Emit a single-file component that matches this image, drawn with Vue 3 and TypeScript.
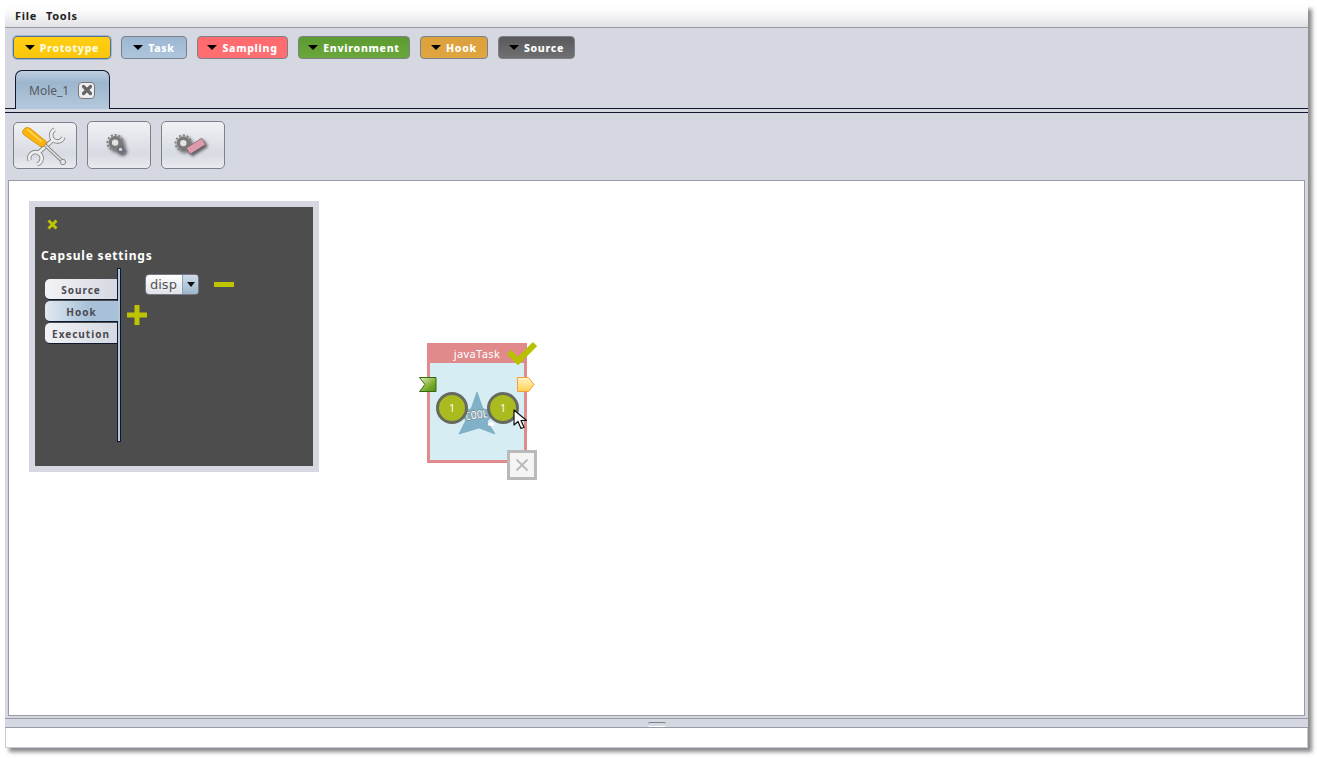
<script setup lang="ts">
const menus = ['File', 'Tools'];

const palette = [
  { name: 'Prototype', cls: 'proto' },
  { name: 'Task', cls: 'task' },
  { name: 'Sampling', cls: 'sampling' },
  { name: 'Environment', cls: 'env' },
  { name: 'Hook', cls: 'hook' },
  { name: 'Source', cls: 'source' },
];

const settingsTabs = [
  { name: 'Source', active: false },
  { name: 'Hook', active: true },
  { name: 'Execution', active: false },
];
</script>

<template>
  <div class="page">
    <div class="window">
      <div class="menubar">
        <span v-for="m in menus" :key="m">{{ m }}</span>
      </div>

      <div class="palette">
        <button v-for="p in palette" :key="p.name" class="pal-btn" :class="p.cls">
          <i class="arrow"></i>{{ p.name }}
        </button>
      </div>

      <div class="tabstrip">
        <div class="tab">
          <span>Mole_1</span>
          <span class="tab-close">
            <svg width="12" height="12" viewBox="0 0 12 12">
              <path d="M2.5 2.5l7 7M9.5 2.5l-7 7" stroke="#666" stroke-width="3.2" stroke-linecap="round" />
            </svg>
          </span>
        </div>
      </div>

      <div class="tools">
        <button class="tool first">
          <svg width="64" height="47" viewBox="0 0 64 47">
            <!-- wrench -->
            <g fill="none" stroke="#858585" stroke-width="4.6">
              <path d="M24 32 L40 18" />
              <path d="M42 7A6.5 6.5 0 1 0 51 15" />
              <path d="M24 43A6.5 6.5 0 1 0 16 39" />
            </g>
            <g fill="none" stroke="#eceded" stroke-width="2.8">
              <path d="M24 32 L40 18" />
              <path d="M42 7A6.5 6.5 0 1 0 51 15" />
              <path d="M24 43A6.5 6.5 0 1 0 16 39" />
            </g>
            <!-- screwdriver -->
            <path d="M31 22 L50 40" stroke="#777" stroke-width="3.4" />
            <path d="M31 22 L50 40" stroke="#e2e2e2" stroke-width="1.8" />
            <circle cx="50.5" cy="40.5" r="2.8" fill="#e4e4e4" stroke="#888" />
            <path d="M10 7c2-3 5-2 7-1l17 14-3 4-3 1-17-12c-2-1-3-4-1-6z" fill="#fbb40c" stroke="#cf8400" stroke-width="0.8" />
            <path d="M14 7l14 12" stroke="#ffd563" stroke-width="1.6" stroke-linecap="round" />
          </svg>
        </button>
        <button class="tool">
          <svg class="soft" width="64" height="47" viewBox="0 0 64 47">
            <circle cx="28" cy="20.5" r="5" fill="#e4e4e4" stroke="#7a7a7a" stroke-width="3.4" />
            <circle cx="28" cy="20.5" r="8" fill="none" stroke="#858585" stroke-width="2" stroke-dasharray="2.2 1.9" />
            <circle cx="33.6" cy="27.5" r="2.8" fill="#cfd3da" stroke="#6a6f7a" stroke-width="2" />
            <circle cx="33.6" cy="27.5" r="4.6" fill="none" stroke="#858585" stroke-width="1.3" stroke-dasharray="1.4 1.3" />
          </svg>
        </button>
        <button class="tool">
          <svg class="soft" width="64" height="47" viewBox="0 0 64 47">
            <circle cx="22" cy="21" r="5" fill="#e4e4e4" stroke="#7a7a7a" stroke-width="3.4" />
            <circle cx="22" cy="21" r="8" fill="none" stroke="#858585" stroke-width="2" stroke-dasharray="2.2 1.9" />
            <path d="M25 26 L41 16 L45 22.5 L29 32.5z" fill="#dd9aac" stroke="#7a5f6a" stroke-width="0.8" />
          </svg>
        </button>
      </div>

      <div class="canvas">
        <div class="panel">
          <svg class="panel-close" width="11" height="11" viewBox="0 0 11 11">
            <path d="M1.5 1.5l8 8M9.5 1.5l-8 8" stroke="#bec400" stroke-width="3" />
          </svg>
          <div class="panel-title">Capsule settings</div>
          <div class="panel-body">
            <div class="side-tabs">
              <div v-for="t in settingsTabs" :key="t.name" class="side-tab" :class="{ active: t.active }">{{ t.name }}</div>
            </div>
            <div class="side-bar"></div>
            <div class="panel-main">
              <div class="combo-row">
                <div class="combo">
                  <span class="combo-text">disp</span>
                  <span class="combo-btn"><i></i></span>
                </div>
                <svg class="minus" width="20" height="5"><rect width="20" height="5" fill="#bec400" /></svg>
              </div>
              <svg class="plus" width="20" height="20" viewBox="0 0 20 20">
                <path d="M7.5 0h5v7.5H20v5h-7.5V20h-5v-7.5H0v-5h7.5z" fill="#bec400" />
              </svg>
            </div>
          </div>
        </div>

        <div class="capsule">
          <div class="cap-title">javaTask</div>
          <div class="cap-body"></div>
          <svg class="cap-check" width="30" height="25" viewBox="0 0 30 25">
            <path d="M2 11l9 9L28 3" fill="none" stroke="#b8c000" stroke-width="6" />
          </svg>
          <svg class="slot-in" width="18" height="15" viewBox="0 0 18 15">
            <defs>
              <linearGradient id="gi" x1="0" y1="0" x2="1" y2="1">
                <stop offset="0" stop-color="#e8f2c8" />
                <stop offset="0.6" stop-color="#7fae2c" />
                <stop offset="1" stop-color="#4f8a1a" />
              </linearGradient>
            </defs>
            <path d="M.5.5h16.5v14H.5l5.5-7z" fill="url(#gi)" stroke="#2f6a10" />
          </svg>
          <svg class="slot-out" width="18" height="15" viewBox="0 0 18 15">
            <defs>
              <linearGradient id="go" x1="0" y1="0" x2="0" y2="1">
                <stop offset="0" stop-color="#fff3c4" />
                <stop offset="1" stop-color="#ffd050" />
              </linearGradient>
            </defs>
            <path d="M.5.5h11l5.5 7-5.5 7H.5z" fill="url(#go)" stroke="#f0a040" />
          </svg>
          <svg class="star" width="46" height="46" viewBox="0 0 46 46">
            <path d="M23 1L29 18L45 20L33 30L41 43L25 37L5 43L12 29L1 20L17 18z" fill="#7fb2c8" stroke="#6d9db3" stroke-width="0.6" />
            <text x="23" y="28" text-anchor="middle" class="cool" textLength="22" lengthAdjust="spacingAndGlyphs" transform="rotate(-8 23 28)">COOL</text>
            <ellipse cx="37" cy="33" rx="3" ry="2" fill="#fff" />
          </svg>
          <div class="badge b1">1</div>
          <div class="badge b2">1</div>
          <svg class="cursor" width="16" height="21" viewBox="0 0 16 21">
            <path d="M1 1v15l4-3.5 3 7 3-1.3-3-6.7h5.5z" fill="#fff" stroke="#111" stroke-width="1.2" stroke-linejoin="round" />
          </svg>
          <div class="cap-remove">
            <svg width="14" height="14" viewBox="0 0 14 14">
              <path d="M1.5 1.5l11 11M12.5 1.5l-11 11" stroke="#b9b9b9" stroke-width="1.8" />
            </svg>
          </div>
        </div>
      </div>

      <div class="splitter"><i></i></div>
      <div class="status"></div>
    </div>
  </div>
</template>

<style scoped>
.page {
  height: 758px;
  box-sizing: border-box;
  padding: 5px 0 10px 5px;
  overflow: hidden;
}

.window {
  width: 1303px;
  height: 743px;
  box-sizing: border-box;
  display: flex;
  flex-direction: column;
  background: #d5d8e1;
  box-shadow: 4px 4px 4px rgba(60, 60, 60, 0.6);
}

.menubar {
  flex: none;
  display: flex;
  gap: 9px;
  padding: 3px 0 0 10px;
  height: 19px;
  border-bottom: 1px solid #989ca6;
  background: linear-gradient(#fff 0, #f9f9fa 35%, #e0e1e5 100%);
  font: 700 11px "Noto Sans", sans-serif;
  letter-spacing: 0.7px;
  color: #222;
}

.palette {
  flex: none;
  display: flex;
  gap: 10px;
  padding: 8px 0 0 8px;
  height: 23px;
}

.pal-btn {
  height: 23px;
  padding: 0;
  box-sizing: border-box;
  display: flex;
  align-items: center;
  justify-content: center;
  gap: 5px;
  border: 1px solid #7c8088;
  border-radius: 4px;
  color: #fff;
  font: 800 10.5px "Noto Sans", sans-serif;
  letter-spacing: 0.7px;
}

.arrow {
  width: 0;
  height: 0;
  border-left: 5px solid transparent;
  border-right: 5px solid transparent;
  border-top: 5px solid #000;
}

.proto { width: 98px; background: linear-gradient(#ffcf14, #f9c60c); color: #fffbe0; border-color: #5c6f8f; box-shadow: 0 0 0 1px #9db8d6; }
.task { width: 66px; background: linear-gradient(#9cb6d2, #aec6dc); }
.sampling { width: 91px; background: linear-gradient(#ff6a6e, #ff6f72); }
.env { width: 112px; background: linear-gradient(#5c9a30, #6aa83c); }
.hook { width: 68px; background: linear-gradient(#dca03c, #e0a640); }
.source { width: 77px; background: linear-gradient(#5a5a5c, #707072); }

.tabstrip {
  flex: none;
  height: 39px;
  margin-top: 11px;
  box-sizing: border-box;
  border-bottom: 1px solid #101830;
  padding-left: 10px;
}

.tab {
  width: 95px;
  height: 39px;
  box-sizing: border-box;
  display: flex;
  align-items: center;
  gap: 9px;
  padding: 0 0 0 13px;
  border: 1px solid #101830;
  border-bottom: none;
  border-radius: 7px 7px 0 0;
  background: linear-gradient(#bfd0e0, #9db6cd 30%, #b3c8dc);
  font: 12px "Noto Sans", sans-serif;
  color: #555a62;
}

.tab-close {
  width: 15px;
  height: 15px;
  display: flex;
  align-items: center;
  justify-content: center;
  border: 1px solid #777;
  border-radius: 4px;
  background: #eeeef0;
}

.tools {
  flex: none;
  display: flex;
  gap: 10px;
  height: 68px;
  box-sizing: border-box;
  padding: 8px 0 0 8px;
  border-top: 1px solid #101830;
  margin-top: 3px;
}

.tool {
  width: 64px;
  height: 48px;
  padding: 0;
  box-sizing: border-box;
  border: 1px solid #7c8088;
  border-radius: 5px;
  background: linear-gradient(#f0f1f4, #d8dbe3 70%, #e8eaef);
  display: flex;
  align-items: center;
  justify-content: center;
}

.tool.first {
  height: 47px;
  margin-top: 1px;
}

.soft {
  filter: drop-shadow(2px 2px 1.5px rgba(0, 0, 0, 0.6));
}

.canvas {
  position: relative;
  flex: 1;
  margin: 0 3px 0 3px;
  box-sizing: border-box;
  border: 1px solid #989ca6;
  background: #fff;
}

.panel {
  position: absolute;
  left: 20px;
  top: 20px;
  width: 290px;
  height: 271px;
  box-sizing: border-box;
  border: 6px solid #d5d8e1;
  background: #4d4d4d;
  display: flex;
  flex-direction: column;
}

.panel-close {
  margin: 12px 0 0 12px;
  flex: none;
}

.panel-title {
  margin: 15px 0 3px 6px;
  height: 21px;
  color: #fff;
  font: 700 12px/21px "Noto Sans", sans-serif;
  letter-spacing: 0.8px;
}

.panel-body {
  display: flex;
  height: 174px;
  padding-left: 10px;
  margin-top: -1px;
}

.side-tabs {
  width: 73px;
  margin-top: 11px;
  margin-right: -1px;
  position: relative;
  z-index: 1;
}

.side-tab {
  height: 21px;
  margin-bottom: 1px;
  text-align: center;
  box-sizing: border-box;
  border: 1px solid #101830;
  border-left: none;
  border-top: none;
  border-radius: 5px 0 0 5px;
  background: linear-gradient(90deg, #f2f3f6, #d5d8e1);
  color: #4a4a4f;
  font: 700 10px/23px "Noto Sans", sans-serif;
  letter-spacing: 1px;
}

.side-tab.active {
  background: linear-gradient(90deg, #e2e9f0, #a8c1d9 60%);
  border-right: none;
}

.side-bar {
  width: 4px;
  box-sizing: border-box;
  border: 1px solid #101830;
  background: #b3c8dc;
}

.panel-main {
  flex: 1;
  display: flex;
  flex-direction: column;
  align-items: flex-start;
}

.combo-row {
  display: flex;
  align-items: center;
  gap: 15px;
  padding: 6px 0 0 24px;
}

.combo {
  width: 54px;
  height: 21px;
  box-sizing: border-box;
  display: flex;
  border: 1px solid #778;
  border-radius: 4px;
  background: linear-gradient(#fff, #dfe2e8);
  overflow: hidden;
}

.combo-text {
  flex: 1;
  padding-left: 4px;
  font: 13px/19px "DejaVu Sans", sans-serif;
  color: #555;
}

.combo-btn {
  width: 15px;
  display: flex;
  align-items: center;
  justify-content: center;
  border-left: 1px solid #8aa0b8;
  background: linear-gradient(#cfdce8, #9db6cd);
}

.combo-btn i {
  width: 0;
  height: 0;
  border-left: 4px solid transparent;
  border-right: 4px solid transparent;
  border-top: 5px solid #111;
}

.plus {
  margin: 10px 0 0 6px;
}

.capsule {
  position: absolute;
  left: 418px;
  top: 162px;
  width: 100px;
  height: 120px;
  box-sizing: border-box;
  border: 3px solid #e08a8c;
  border-top: none;
  display: flex;
  flex-direction: column;
}

.cap-title {
  height: 20px;
  margin: 0 -1px;
  background: #e08a8c;
  color: #fff;
  text-align: center;
  font: 11px/21px "Noto Sans", sans-serif;
  letter-spacing: 0.4px;
}

.cap-body {
  flex: 1;
  background: #d6edf3;
}

.cap-check {
  position: absolute;
  left: 77px;
  top: -2px;
}

.slot-in {
  position: absolute;
  left: -11px;
  top: 34px;
}

.slot-out {
  position: absolute;
  left: 87px;
  top: 34px;
}

.star {
  position: absolute;
  left: 24px;
  top: 48px;
}

.cool {
  font: 700 12px "DejaVu Sans", sans-serif;
  fill: #fff;
  stroke: #444;
  stroke-width: 0.4px;
}

.badge {
  position: absolute;
  top: 49px;
  width: 32px;
  height: 32px;
  box-sizing: border-box;
  border: 3px solid #666a60;
  border-radius: 50%;
  background: #a9bb1e;
  color: #fff;
  text-align: center;
  font: 10px/26px "Noto Sans", sans-serif;
}

.b1 { left: 6px; }
.b2 { left: 57px; }

.cursor {
  position: absolute;
  left: 83px;
  top: 66px;
}

.cap-remove {
  position: absolute;
  left: 77px;
  top: 107px;
  width: 30px;
  height: 30px;
  box-sizing: border-box;
  border: 3px solid #b9b9b9;
  background: #f4f4f4;
  display: flex;
  align-items: center;
  justify-content: center;
}

.splitter {
  flex: none;
  height: 10px;
  box-sizing: border-box;
  margin-top: 2px;
  border-top: 1px solid #989ca6;
  border-bottom: 1px solid #989ca6;
  display: flex;
  justify-content: center;
  padding-top: 3px;
}

.splitter i {
  width: 18px;
  height: 3px;
  border-top: 1px solid #7c8088;
  border-bottom: 1px solid #fff;
  border-radius: 2px;
}

.status {
  flex: none;
  height: 20px;
  box-sizing: border-box;
  background: #fff;
  border: 1px solid #c8cbd6;
  border-top: none;
}
</style>
